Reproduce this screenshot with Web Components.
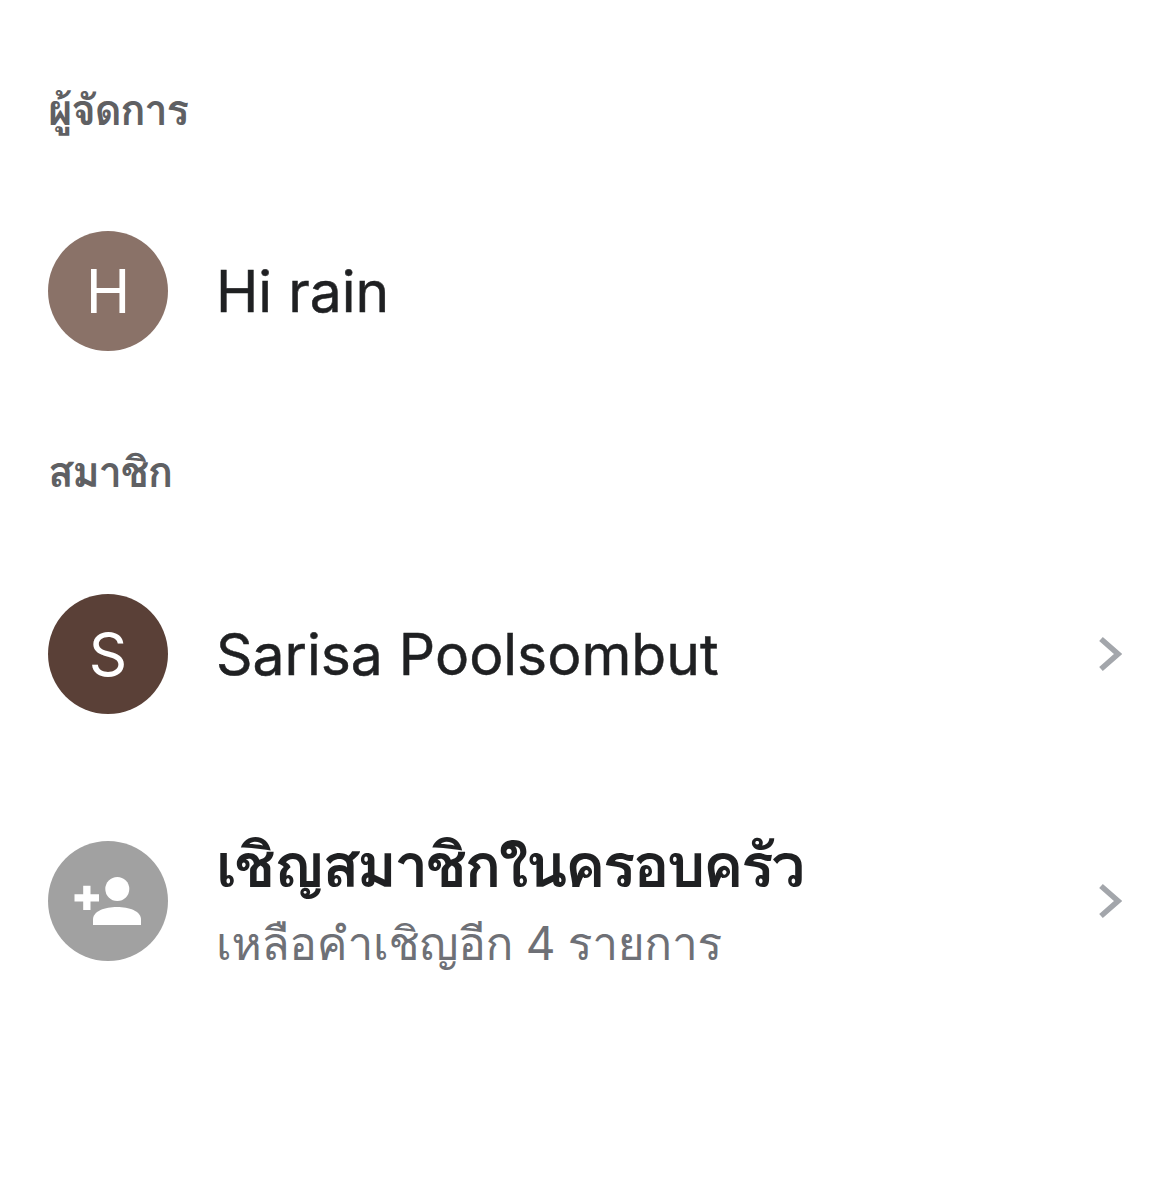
<!DOCTYPE html>
<html lang="th">
<head>
<meta charset="utf-8">
<title>ครอบครัว</title>
<style>
  html, body { margin: 0; background: #fff; }
  body { font-family: Inter, Loma, "Liberation Sans", sans-serif; }
</style>
</head>
<body>
<family-page>
  <section-label>ผู้จัดการ</section-label>
  <member-row initial="H" color="#8a7268" name="Hi rain"></member-row>
  <section-label style="margin-bottom: 92px">สมาชิก</section-label>
  <member-row initial="S" color="#5a4037" name="Sarisa Poolsombut" link></member-row>
  <invite-row title="เชิญสมาชิกในครอบครัว" note="เหลือคำเชิญอีก 4 รายการ"></invite-row>
</family-page>
<script>
class FamilyPage extends HTMLElement {
  constructor() {
    super()
    this.attachShadow({ mode: 'open' })
    this.shadowRoot.innerHTML = `
      <style>
        :host { display: block; height: 1185px; box-sizing: border-box; padding: 80px 48px 0 48px; overflow: hidden; }
        .list { display: flex; flex-direction: column; }
      </style>
      <div class="list"><slot></slot></div>`
  }
}
customElements.define('family-page', FamilyPage)

class SectionLabel extends HTMLElement {
  constructor() {
    super()
    this.attachShadow({ mode: 'open' })
    this.shadowRoot.innerHTML = `
      <style>
        :host { display: flex; align-items: center; height: 60px; margin-bottom: 91px; font-size: 42px; letter-spacing: -1.4px; font-weight: 700; color: #5f6063; }
      </style>
      <slot></slot>`
  }
}
customElements.define('section-label', SectionLabel)

const chevron = `<svg width="24" height="36" viewBox="0 0 24 36" fill="none"><path d="M3 3 L20 18 L3 33" stroke="#a3a6ab" stroke-width="5.5"/></svg>`

class MemberRow extends HTMLElement {
  constructor() {
    super()
    this.attachShadow({ mode: 'open' })
  }
  connectedCallback() {
    const link = this.hasAttribute('link')
    this.shadowRoot.innerHTML = `
      <style>
        :host { display: flex; align-items: center; height: 120px; margin-bottom: 91px; color: #1f2022; }
        .avatar { width: 120px; height: 120px; border-radius: 50%; display: flex; align-items: center; justify-content: center; color: #fff; font-size: 60px; flex: none; }
        .name { margin-left: 48px; font-size: 57px; flex: 1; -webkit-text-stroke: 0.5px #1f2022; }
        .go { display: flex; }
      </style>
      <div class="avatar" style="background:${this.getAttribute('color')}">${this.getAttribute('initial')}</div>
      <div class="name">${this.getAttribute('name')}</div>
      ${link ? `<div class="go">${chevron}</div>` : ''}`
  }
}
customElements.define('member-row', MemberRow)

class InviteRow extends HTMLElement {
  constructor() {
    super()
    this.attachShadow({ mode: 'open' })
  }
  connectedCallback() {
    this.shadowRoot.innerHTML = `
      <style>
        :host { display: flex; align-items: center; height: 120px; margin-top: 36px; }
        .avatar { width: 120px; height: 120px; border-radius: 50%; background: #a1a1a1; display: flex; align-items: center; justify-content: center; flex: none; }
        .text { margin-left: 48px; flex: 1; display: flex; flex-direction: column; gap: 4px; }
        .title { font-size: 61px; letter-spacing: -2.7px; font-weight: 700; color: #1f2022; line-height: 70px; margin-top: -4px; }
        .note { font-size: 46px; letter-spacing: -0.3px; color: #6e7076; line-height: 60px; margin-top: 9px; margin-bottom: -5px; }
        .go { display: flex; }
      </style>
      <div class="avatar">
        <svg width="120" height="120" viewBox="0 0 120 120" fill="#fff">
          <circle cx="69.3" cy="48" r="12"/>
          <path d="M45 84 V78.5 C45 70 57 66 69 66 C81 66 93 70 93 78.5 V84 Z"/>
          <path d="M26.5 53.3 H35.2 V44.7 H42.5 V53.3 H51 V60.6 H42.5 V69 H35.2 V60.6 H26.5 Z"/>
        </svg>
      </div>
      <div class="text">
        <div class="title">${this.getAttribute('title')}</div>
        <div class="note">${this.getAttribute('note')}</div>
      </div>
      <div class="go">${chevron}</div>`
  }
}
customElements.define('invite-row', InviteRow)
</script>
</body>
</html>
